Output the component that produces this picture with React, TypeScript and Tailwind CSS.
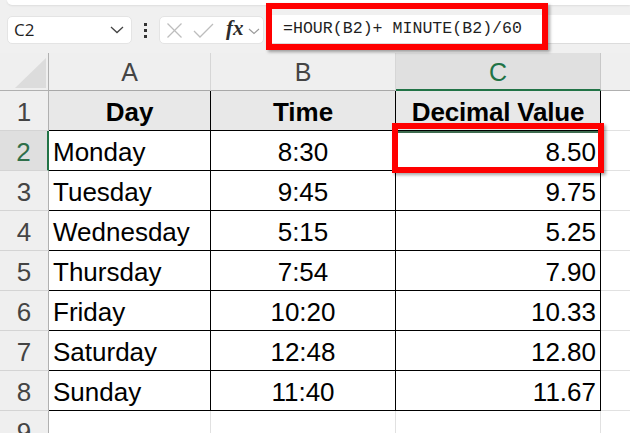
import React from "react";

const data: [string, string, string][] = [
  ["Monday", "8:30", "8.50"],
  ["Tuesday", "9:45", "9.75"],
  ["Wednesday", "5:15", "5.25"],
  ["Thursday", "7:54", "7.90"],
  ["Friday", "10:20", "10.33"],
  ["Saturday", "12:48", "12.80"],
  ["Sunday", "11:40", "11.67"],
];

function RowHeader({ n, active }: { n: number; active?: boolean }) {
  return (
    <div
      className={
        active
          ? "bg-[#dfdfdf] border-r-2 border-r-[#217346] border-b border-b-[#d4d4d4] flex items-center justify-center pt-[3px] text-[26px] text-[#2f6f4a]"
          : "bg-[#efefef] border-r border-r-[#b0b0b0] border-b border-b-[#d4d4d4] flex items-center justify-center pt-[3px] text-[26px] text-[#444]"
      }
    >
      {n}
    </div>
  );
}

export default function App() {
  return (
    <div className="relative w-[630px] h-[433px] overflow-hidden bg-[#f0f0f0] font-['Liberation_Sans',Arial,sans-serif]">
      {/* top white strip */}
      <div className="h-[5px] ml-[7px] bg-white rounded-bl-[6px] shadow-[0_1px_2px_rgba(0,0,0,0.08)]" />

      {/* toolbar */}
      <div className="h-[48px] flex items-start pt-[11px]">
        <div className="ml-[7px] w-[125px] h-[28px] bg-white rounded-[5px] border border-[#e4e4e4] flex items-center justify-between pl-[6px] pr-[6px]">
          <span className="text-[17px] text-[#1f1f1f] font-['Open_Sans',sans-serif]">C2</span>
          <svg width="14" height="8" viewBox="0 0 14 8" className="mr-[1px]">
            <polyline points="1,1 7,6.5 13,1" fill="none" stroke="#444" strokeWidth="1.3" />
          </svg>
        </div>
        <div className="w-[27px] h-[28px] flex flex-col items-center justify-center gap-[3px]">
          <div className="w-[3px] h-[3px] bg-[#333]" />
          <div className="w-[3px] h-[3px] bg-[#333]" />
          <div className="w-[3px] h-[3px] bg-[#333]" />
        </div>
        <div className="w-[105px] h-[28px] bg-white rounded-[5px] border border-[#e4e4e4] flex items-center pl-[6px]">
          <svg width="17" height="17" viewBox="0 0 17 17">
            <line x1="1.5" y1="1.5" x2="15.5" y2="15.5" stroke="#bdbdbd" strokeWidth="1.3" />
            <line x1="15.5" y1="1.5" x2="1.5" y2="15.5" stroke="#bdbdbd" strokeWidth="1.3" />
          </svg>
          <svg width="21" height="17" viewBox="0 0 21 17" className="ml-[10px]">
            <polyline points="1,9 7,15 20,2" fill="none" stroke="#bdbdbd" strokeWidth="1.3" />
          </svg>
          <span className="ml-[12px] text-[21px] leading-none italic font-semibold text-[#2b2b2b] font-['Liberation_Serif',serif] -mt-[3px]">
            fx
          </span>
          <svg width="12" height="7" viewBox="0 0 12 7" className="ml-[4px] mt-[2px]">
            <polyline points="1,1 6,5.5 11,1" fill="none" stroke="#9a9a9a" strokeWidth="1.1" />
          </svg>
        </div>
        <div className="ml-[6px] flex-1 h-[29px] -mt-[1px] bg-white border-b border-[#dcdcdc] flex items-center pl-[13px]">
          <span className="text-[16.6px] text-[#1f1f1f] font-['Liberation_Mono',monospace] whitespace-pre">
            =HOUR(B2)+ MINUTE(B2)/60
          </span>
        </div>
      </div>

      {/* sheet grid */}
      <div className="grid grid-cols-[49px_162px_185px_205px_1fr] grid-rows-[38px_repeat(9,40px)]">
        {/* column headers */}
        <div className="relative bg-[#efefef] border-r border-b border-[#b0b0b0]">
          <svg width="49" height="38" viewBox="0 0 49 38" className="absolute inset-0">
            <polygon points="15,35 46,35 46,5" fill="#dcdcdc" />
          </svg>
        </div>
        <div className="bg-[#efefef] border-r border-r-[#d6d6d6] border-b border-b-[#a8a8a8] flex items-center justify-center pt-[3px] text-[25px] text-[#444]">
          A
        </div>
        <div className="bg-[#efefef] border-r border-r-[#d6d6d6] border-b border-b-[#a8a8a8] flex items-center justify-center pt-[3px] text-[25px] text-[#444]">
          B
        </div>
        <div className="bg-[#e0e0e0] border-r border-r-[#c8c8c8] border-b-2 border-b-[#217346] flex items-center justify-center pt-[3px] text-[25px] text-[#217346]">
          C
        </div>
        <div className="bg-[#efefef] border-b border-b-[#b0b0b0]" />

        {/* row 1 */}
        <RowHeader n={1} />
        <div className="bg-[#e8e8e8] border-r border-b border-black flex items-center justify-center pt-[3px] text-[26px] font-bold text-black">
          Day
        </div>
        <div className="bg-[#e8e8e8] border-r border-b border-black flex items-center justify-center pt-[3px] text-[26px] font-bold text-black">
          Time
        </div>
        <div className="bg-[#e8e8e8] border-r border-b border-black flex items-center justify-center pt-[3px] text-[26px] font-bold text-black tracking-[-0.2px]">
          Decimal Value
        </div>
        <div className="bg-white border-b border-[#e1e1e1]" />

        {data.map(([day, time, dec], i) => (
          <React.Fragment key={day}>
            <RowHeader n={i + 2} active={i === 0} />
            <div className="bg-white border-r border-b border-black flex items-center pl-[4px] pt-[3px] text-[26px] text-black">
              {day}
            </div>
            <div className="bg-white border-r border-b border-black flex items-center justify-center pt-[3px] text-[26px] text-black">
              {time}
            </div>
            <div
              className={
                i === 0
                  ? "bg-white border-r border-b border-black border-t-2 border-t-[#3d6b4f] flex items-center justify-end pr-[4px] pt-[1px] text-[26px] text-black"
                  : "bg-white border-r border-b border-black flex items-center justify-end pr-[4px] pt-[3px] text-[26px] text-black"
              }
            >
              {dec}
            </div>
            <div className="bg-white border-b border-[#e1e1e1]" />
          </React.Fragment>
        ))}

        {/* row 9 */}
        <RowHeader n={9} />
        <div className="bg-white border-r border-[#e1e1e1]" />
        <div className="bg-white border-r border-[#e1e1e1]" />
        <div className="bg-white border-r border-[#e1e1e1]" />
        <div className="bg-white" />
      </div>

      {/* annotation: red box around formula */}
      <div className="absolute left-[266px] top-[3px] w-[282px] h-[47px] border-[6px] border-[#ff0000] shadow-[2px_2px_3px_rgba(0,0,0,0.35)]" />
      {/* annotation: red box around C2 */}
      <div className="absolute left-[392px] top-[123px] w-[212px] h-[50px] border-[6px] border-[#ff0000] shadow-[2px_2px_3px_rgba(0,0,0,0.35)]" />
    </div>
  );
}
